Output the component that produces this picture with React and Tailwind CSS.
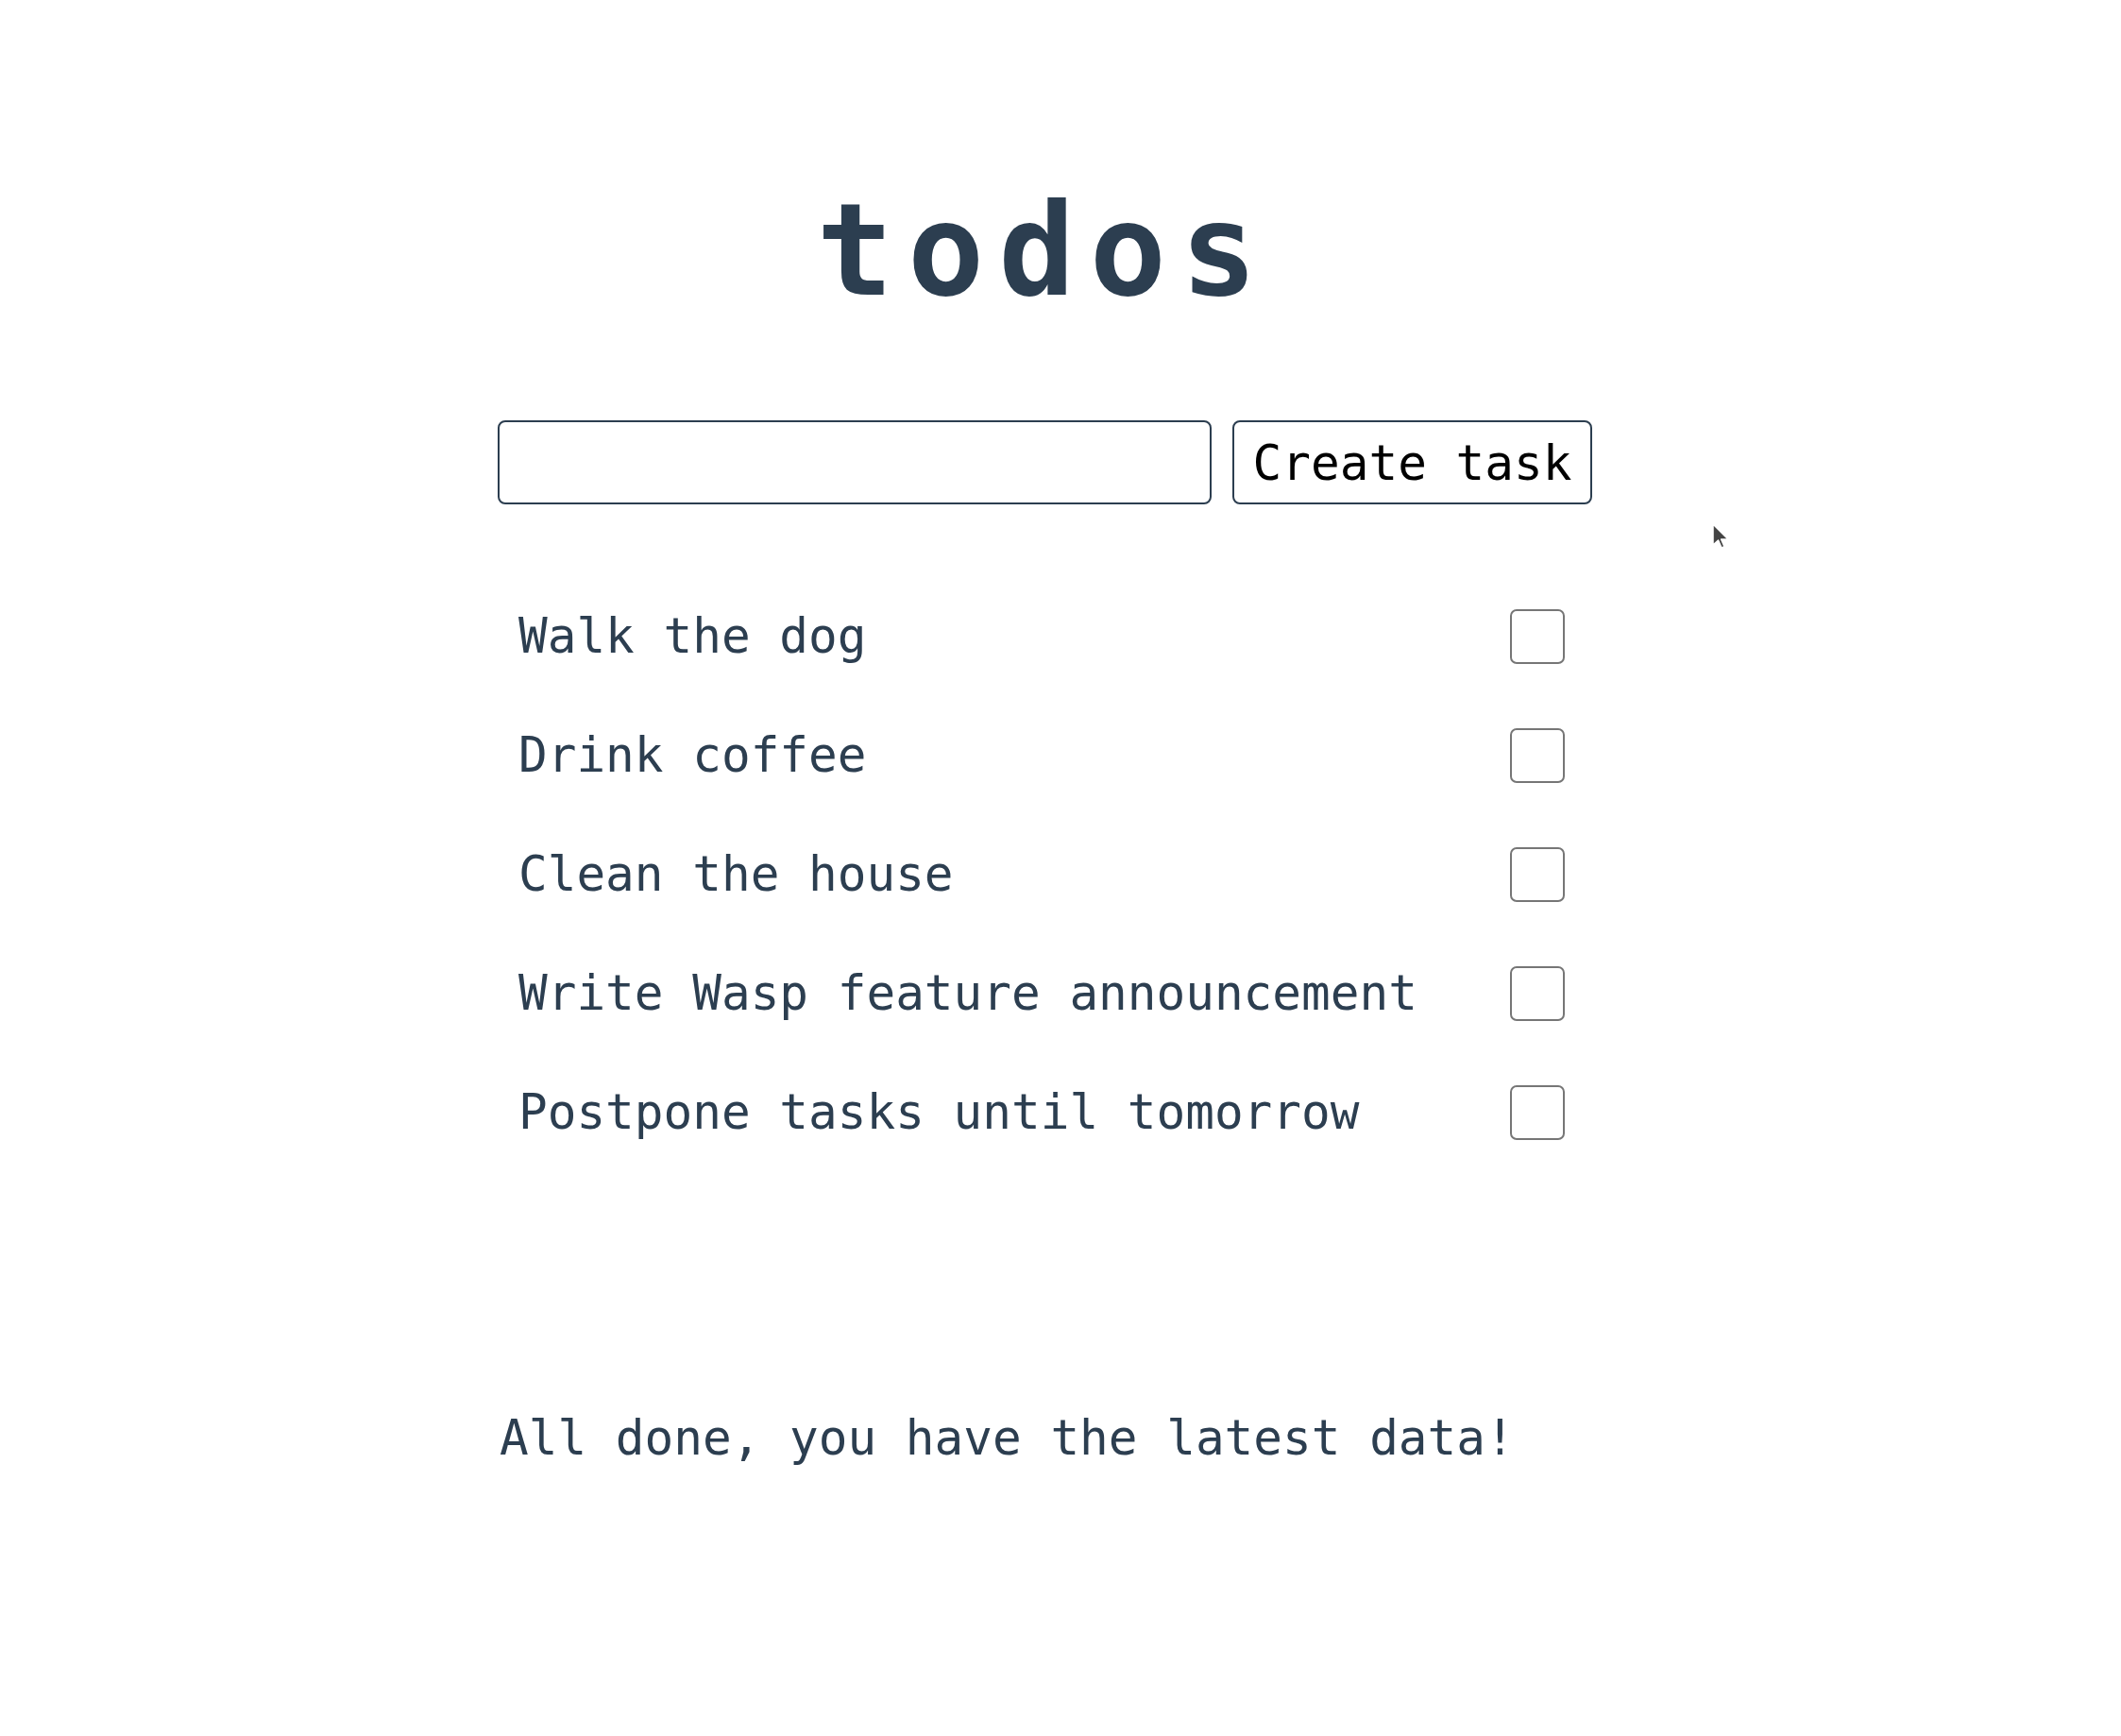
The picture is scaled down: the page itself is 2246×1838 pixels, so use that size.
import React, { useState } from "react";

const initialTasks = [
  { id: 1, text: "Walk the dog", done: false },
  { id: 2, text: "Drink coffee", done: false },
  { id: 3, text: "Clean the house", done: false },
  { id: 4, text: "Write Wasp feature announcement", done: false },
  { id: 5, text: "Postpone tasks until tomorrow", done: false },
];

const App = () => {
  const [tasks, setTasks] = useState(initialTasks);
  const [draft, setDraft] = useState("");

  const toggle = (id) => {
    setTasks(tasks.map((t) => (t.id === id ? { ...t, done: !t.done } : t)));
  };

  const handleSubmit = (e) => {
    e.preventDefault();
    if (!draft.trim()) return;
    setTasks([...tasks, { id: Date.now(), text: draft, done: false }]);
    setDraft("");
  };

  return (
    <div className="relative min-h-screen bg-white font-['DejaVu_Sans_Mono',monospace] text-[#2c3e50]">
      <div className="ml-[527px] w-[1159px] pt-[198px]">
        <h1 className="pr-[2px] text-center text-[135px] font-bold leading-none tracking-[15px]">
          todos
        </h1>

        <form onSubmit={handleSubmit} className="mt-[112px] flex gap-[22px]">
          <input
            type="text"
            value={draft}
            onChange={(e) => setDraft(e.target.value)}
            className="h-[89px] w-[756px] rounded-[8px] border-2 border-[#2c3e50] px-4 text-[51px] outline-none"
          />
          <button
            type="submit"
            className="h-[89px] w-[381px] rounded-[8px] border-2 border-[#2c3e50] bg-white pt-[4px] text-center text-[51px] text-black"
          >
            Create task
          </button>
        </form>

        <ul className="mt-[77px]">
          {tasks.map((task) => (
            <li
              key={task.id}
              className="flex h-[126px] items-center justify-between pl-[22px] pr-[29px]"
            >
              <span className="text-[51px]">{task.text}</span>
              <input
                type="checkbox"
                checked={task.done}
                onChange={() => toggle(task.id)}
                className="h-[58px] w-[58px] cursor-pointer appearance-none rounded-[7px] border-2 border-[#767676] bg-white checked:bg-[#2c3e50]"
              />
            </li>
          ))}
        </ul>

        <p className="mt-[244px] pl-[2px] text-[51px]">
          All done, you have the latest data!
        </p>
      </div>

      {/* mouse pointer from the capture */}
      <svg
        className="absolute left-[1812px] top-[553px]"
        width="22"
        height="30"
        viewBox="0 0 22 30"
      >
        <path
          d="M2 2 L2 24 L7.5 19 L11 27 L14 25.6 L10.6 18 L18 18 Z"
          fill="#444"
          stroke="#fff"
          strokeWidth="1.5"
          strokeLinejoin="round"
        />
      </svg>
    </div>
  );
};

export default App;
